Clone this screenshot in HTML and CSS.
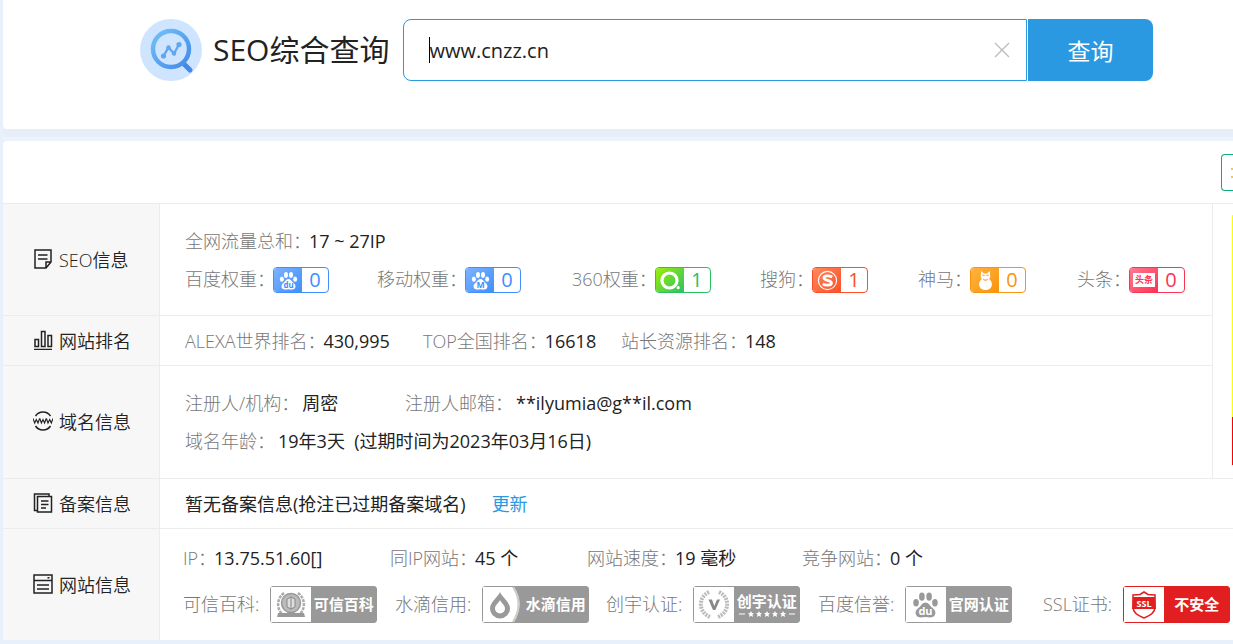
FILE: index.html
```
<!DOCTYPE html>
<html lang="zh">
<head>
    <meta charset="UTF-8">
    <meta name="viewport" content="width=device-width, initial-scale=1.0">
    <title>SEO综合查询</title>
    <link rel="stylesheet" href="styles.css">
</head>
<body>

    <svg class="defs" width="0" height="0" aria-hidden="true">
        <symbol id="paw" viewBox="0 0 24 24">
            <ellipse cx="3.6" cy="10.4" rx="2.5" ry="3.3"/>
            <ellipse cx="8.8" cy="5" rx="2.5" ry="3.6"/>
            <ellipse cx="15.2" cy="5" rx="2.5" ry="3.6"/>
            <ellipse cx="20.4" cy="10.4" rx="2.5" ry="3.3"/>
            <path d="M12 10.2c-2.4 0-3.4 2-4.8 3.5-1.600 1.700-4 2.900-4 5.700 0 2.700 1.800 4.100 4.300 4.100 1.600 0 3-.4 4.500-.4s2.900.4 4.500.4c2.500 0 4.300-1.400 4.300-4.100 0-2.800-2.400-4-4-5.700-1.400-1.500-2.400-3.500-4.800-3.500z"/>
        </symbol>
    </svg>

    <header class="top">
        <div class="search">
            <svg class="logo" viewBox="0 0 62 62" aria-hidden="true">
                <defs>
                    <linearGradient id="logoFill" x1="0" y1="0" x2="1" y2="1">
                        <stop offset="0" stop-color="#72c2f6"/>
                        <stop offset="1" stop-color="#4489e8"/>
                    </linearGradient>
                </defs>
                <circle cx="31" cy="31" r="31" fill="#cfe5ff"/>
                <path d="M44 45L50 51" stroke="#4489e8" stroke-width="5" stroke-linecap="round"/>
                <circle cx="31" cy="30" r="18" fill="none" stroke="url(#logoFill)" stroke-width="4.500"/>
                <path d="M23.500 37L28.500 28.500L34 34.500L39 25.500" fill="none" stroke="#62a6ef" stroke-width="2.400"/>
                <g fill="#62a6ef">
                    <circle cx="23.500" cy="37" r="2.600"/>
                    <circle cx="28.500" cy="28.500" r="2.200"/>
                    <circle cx="34" cy="34.500" r="2.200"/>
                    <circle cx="39" cy="25.500" r="2.600"/>
                </g>
            </svg>
            <h1>SEO综合查询</h1>
            <form class="search-form">
                <div class="search-box">
                    <input type="text" value="www.cnzz.cn" aria-label="域名">
                    <span class="caret"></span>
                    <button type="button" class="clear" aria-label="清空">
                        <svg viewBox="0 0 16 16"><path d="M1 1L15 15M15 1L1 15" stroke="#bbb" stroke-width="1.300"/></svg>
                    </button>
                </div>
                <button type="button" class="submit">查询</button>
            </form>
        </div>
    </header>

    <main class="panel">
        <div class="panel-head">
            <button type="button" class="tool" aria-label="工具">
                <svg viewBox="0 0 16 16"><path d="M0 4H14M0 12H14" stroke="#f3c84b" stroke-width="2"/></svg>
            </button>
        </div>

        <table class="info">
            <colgroup>
                <col class="col-name">
                <col>
                <col class="col-side">
            </colgroup>
            <tr>
                <th scope="row">
                    <div class="name">
                        <svg viewBox="0 0 20 20"><path d="M2 1H18V13L13 19H2ZM18 13H13V19M5 6H14.500M5 10H14.500"/></svg>
                        SEO信息
                    </div>
                </th>
                <td>
                    <div class="line"><span class="label">全网流量总和：</span>17 ~ 27IP</div>
                    <div class="line weights">
                        <div class="item"><span class="label">百度权重：</span>
                            <a href="#" class="rank blue">
                                <span class="rank-icon"><svg viewBox="0 0 24 24"><use href="#paw" fill="#fff"/><text x="12" y="21.500" text-anchor="middle" font-size="10" font-weight="700" fill="#3f8ffc">du</text></svg></span>
                                <span class="rank-num">0</span>
                            </a>
                        </div>
                        <div class="item"><span class="label">移动权重：</span>
                            <a href="#" class="rank blue">
                                <span class="rank-icon"><svg viewBox="0 0 24 24"><use href="#paw" fill="#fff"/><text x="12" y="22" text-anchor="middle" font-size="11" font-weight="700" fill="#3f8ffc">M</text></svg></span>
                                <span class="rank-num">0</span>
                            </a>
                        </div>
                        <div class="item"><span class="label">360权重：</span>
                            <a href="#" class="rank green">
                                <span class="rank-icon"><svg viewBox="0 0 24 24"><circle cx="12" cy="12" r="9.500" fill="none" stroke="#fff" stroke-width="4"/><circle cx="23" cy="21" r="2" fill="#fff"/></svg></span>
                                <span class="rank-num">1</span>
                            </a>
                        </div>
                        <div class="item"><span class="label">搜狗：</span>
                            <a href="#" class="rank red">
                                <span class="rank-icon"><svg viewBox="0 0 24 24"><circle cx="12" cy="12" r="11.500" fill="none" stroke="#fff" stroke-width="1.400"/><path d="M18 7.500C14 5.500 7.500 5.500 7.500 8.700C7.500 12 17 11.500 17 15C17 18.500 10 18.600 6 16.300" fill="none" stroke="#fff" stroke-width="3.600"/></svg></span>
                                <span class="rank-num">1</span>
                            </a>
                        </div>
                        <div class="item"><span class="label">神马：</span>
                            <a href="#" class="rank orange">
                                <span class="rank-icon"><svg viewBox="0 0 24 24"><path d="M6.500 0L10 3H14L17.500 0L18 8L16.500 10C19 12 20.500 14.500 20 18C19.500 22 16 24 12 24S4.500 22 4 18C3.500 14.500 5 12 7.500 10L6 8Z" fill="#fff"/><path d="M8 5.500H11M13 5.500H16M9 10.500Q12 12.500 15 10.500" fill="none" stroke="#ff9a0c" stroke-width="1.300"/></svg></span>
                                <span class="rank-num">0</span>
                            </a>
                        </div>
                        <div class="item"><span class="label">头条：</span>
                            <a href="#" class="rank pink">
                                <span class="rank-icon"><span class="toutiao">头条</span></span>
                                <span class="rank-num">0</span>
                            </a>
                        </div>
                    </div>
                </td>
                <td class="side" rowspan="3"><div class="ad"></div></td>
            </tr>
            <tr class="short">
                <th scope="row">
                    <div class="name">
                        <svg viewBox="0 0 20 20"><path d="M1 19.500H19M2 9.500H5.500V16.500H2ZM8.500 1.500H12V16.500H8.500ZM15 5.500H18.500V16.500H15Z"/></svg>
                        网站排名
                    </div>
                </th>
                <td>
                    <div class="line ranks">
                        <div class="item"><span class="label">ALEXA世界排名：</span>430,995</div>
                        <div class="item"><span class="label">TOP全国排名：</span>16618</div>
                        <div class="item"><span class="label">站长资源排名：</span>148</div>
                    </div>
                </td>
            </tr>
            <tr class="domain">
                <th scope="row">
                    <div class="name">
                        <svg viewBox="0 0 20 20"><path d="M2.500 5A9 9 0 0 1 17.500 5M2.500 15A9 9 0 0 0 17.500 15"/><path stroke-width="1.100" d="M0 7.500L1.700 12L3.300 8.500L5 12L6.600 7.500M6.800 7.500L8.400 12L10 8.500L11.600 12L13.200 7.500M13.400 7.500L15 12L16.700 8.500L18.300 12L20 7.500"/></svg>
                        域名信息
                    </div>
                </th>
                <td>
                    <div class="line owner">
                        <div class="item"><span class="label">注册人/机构：</span><span class="wide">周密</span></div>
                        <div class="item"><span class="label">注册人邮箱：</span><span class="wide">**ilyumia@g**il.com</span></div>
                    </div>
                    <div class="line"><span class="label">域名年龄：</span><span class="wide">19年3天&nbsp; (过期时间为2023年03月16日)</span></div>
                </td>
            </tr>
            <tr class="short">
                <th scope="row">
                    <div class="name">
                        <svg viewBox="0 0 20 20"><path d="M4.500 3.500H18.500V19H4.500ZM4.500 17.500H1.500V1H16V3.500M8 8H15.500M8 11.500H15.500M8 15H13"/></svg>
                        备案信息
                    </div>
                </th>
                <td colspan="2">
                    <div class="line record">暂无备案信息(抢注已过期备案域名)<a href="#">更新</a></div>
                </td>
            </tr>
            <tr class="site">
                <th scope="row">
                    <div class="name">
                        <svg viewBox="0 0 20 20"><path d="M1 1H19V19H1ZM1 6.500H19M4 11H16M4 15H16M14.500 3.800H16.500"/></svg>
                        网站信息
                    </div>
                </th>
                <td colspan="2">
                    <div class="line stats">
                        <div class="item"><span class="label">IP：</span>13.75.51.60[]</div>
                        <div class="item"><span class="label">同IP网站：</span>45 个</div>
                        <div class="item"><span class="label">网站速度：</span>19 毫秒</div>
                        <div class="item"><span class="label">竞争网站：</span>0 个</div>
                    </div>
                    <div class="line certs">
                        <div class="item"><span class="label">可信百科:</span>
                            <a href="#" class="cert">
                                <svg viewBox="0 0 40 35" aria-hidden="true">
                                    <path d="M13 6C5 12 6 22 11 27M27 6C35 12 34 22 29 27" fill="none" stroke="#aaa" stroke-width="2.500" stroke-dasharray="3 1"/>
                                    <circle cx="20" cy="16" r="9.500" fill="#bbb" stroke="#999" stroke-width="1.500"/>
                                    <path d="M16 12L20 10L24 12V20L20 22L16 20ZM20 10V22" fill="#ddd" stroke="#888"/>
                                    <path d="M7 26L33 26L34 30H6Z" fill="#999"/>
                                </svg>
                                <span>可信百科</span>
                            </a>
                        </div>
                        <div class="item"><span class="label">水滴信用:</span>
                            <a href="#" class="cert">
                                <svg viewBox="0 0 40 35" aria-hidden="true">
                                    <path d="M31 0Q42 17 31 35H40V0Z" fill="#999"/>
                                    <path d="M30 0Q41 17 30 35" fill="none" stroke="#ccc" stroke-width="2"/>
                                    <path d="M17 5C15 10 7 15 7 21.500A10 10 0 0 0 27 21.500C27 15 19 10 17 5ZM17 13C16 16 12 18 12 21.500A5 5 0 0 0 22 21.500C22 18 18 16 17 13Z" fill="#999" fill-rule="evenodd"/>
                                </svg>
                                <span>水滴信用</span>
                            </a>
                        </div>
                        <div class="item"><span class="label">创宇认证:</span>
                            <a href="#" class="cert">
                                <svg viewBox="0 0 40 35" aria-hidden="true">
                                    <path d="M15 5C4 10 4 25 16 30M25 5C36 10 36 25 24 30" fill="none" stroke="#bbb" stroke-width="4" stroke-dasharray="2 1"/>
                                    <path d="M14.500 12.500H18L20.300 19L23 12.500H26L21.300 23H19Z" fill="#888"/>
                                </svg>
                                <span>创宇认证
                                    <svg class="stars" viewBox="0 0 56 6" aria-hidden="true">
                                        <path d="M0 3H6M50 3H56" stroke="#fff"/>
                                        <g fill="#fff">
                                            <path id="star" d="M12 0L13 2H15L13.500 3.600L14 6L12 4.800L10 6L10.500 3.600L9 2H11Z"/>
                                            <use href="#star" x="8"/><use href="#star" x="16"/><use href="#star" x="24"/><use href="#star" x="32"/>
                                        </g>
                                    </svg>
                                </span>
                            </a>
                        </div>
                        <div class="item"><span class="label">百度信誉:</span>
                            <a href="#" class="cert">
                                <svg viewBox="0 0 40 35" aria-hidden="true">
                                    <use href="#paw" x="6" y="4" width="27" height="27" fill="#999"/>
                                    <text x="19.500" y="28" text-anchor="middle" font-size="11" font-weight="700" fill="#fff">du</text>
                                </svg>
                                <span>官网认证</span>
                            </a>
                        </div>
                        <div class="item"><span class="label">SSL证书:</span>
                            <a href="#" class="cert danger">
                                <svg viewBox="0 0 40 35" aria-hidden="true">
                                    <path d="M20 5L24 7.500L31 8V20Q31 27 20 31Q9 27 9 20V8L16 7.500Z" fill="#fff" stroke="#e21f20" stroke-width="1.500"/>
                                    <path d="M9 10H31L32 22H8Z" fill="#e21f20"/>
                                    <text x="20" y="20" text-anchor="middle" font-size="9" font-weight="700" fill="#fff">SSL</text>
                                </svg>
                                <span>不安全</span>
                            </a>
                        </div>
                    </div>
                </td>
            </tr>
        </table>
    </main>

</body>
</html>
```
FILE: styles.css
```
* {
    box-sizing: border-box;
}
body {
    margin: 0;
    padding: 0 0 4px 3px;
    background-color: #e8f1fb;
    color: #222;
    font-family: "Open Sans", "Noto Sans CJK SC", sans-serif;
    font-size: 18px;
    overflow: hidden;
}
a {
    color: #2b99e2;
    text-decoration: none;
}
button, input {
    font-family: inherit;
    padding: 0;
    border: none;
    background: none;
}
.defs {
    position: absolute;
}

/* search */
.top {
    background-color: #fff;
    padding: 19px 80px 48px 137px;
    border-radius: 0 0 0 4px;
    box-shadow: 0 8px 0 #e6eef7, 0 12px 0 #edf3fa;
}
.search {
    display: flex;
    align-items: center;
}
.logo {
    width: 62px;
    height: 62px;
    flex: none;
}
h1 {
    margin: 0 14px 0 11px;
    font-size: 30px;
    font-weight: 400;
    line-height: 62px;
    white-space: nowrap;
}
.search-form {
    flex: 1;
    display: flex;
    gap: 1px;
}
.search-box {
    flex: 1;
    display: flex;
    align-items: center;
    position: relative;
    height: 62px;
    padding: 0 16px 0 25px;
    border: 1px solid #2b99e2;
    border-radius: 8px 0 0 8px;
}
.search-box input {
    flex: 1;
    font-size: 20px;
    color: #222;
    outline: none;
}
.caret {
    position: absolute;
    left: 25px;
    top: 17px;
    width: 1px;
    height: 26px;
    background-color: #000;
}
.clear, .clear svg {
    display: block;
    width: 16px;
    height: 16px;
}
.submit {
    width: 125px;
    background-color: #2b99e2;
    border-radius: 0 8px 8px 0;
    color: #fff;
    font-size: 23px;
}

/* panel */
.panel {
    margin-top: 12px;
    background-color: #fff;
    border-radius: 4px 0 0 0;
}
.panel-head {
    display: flex;
    justify-content: flex-end;
    height: 62px;
    padding-top: 13px;
}
.tool {
    width: 12px;
    height: 37px;
    padding-left: 9px;
    border: 1px solid #0bad7f;
    border-right: none;
    border-radius: 4px 0 0 4px;
    overflow: hidden;
}
.tool svg {
    display: block;
    width: 16px;
    height: 16px;
}

/* info table */
.info {
    width: 100%;
    table-layout: fixed;
    border-spacing: 0;
    border-top: 1px solid #ececec;
}
.col-name {
    width: 157px;
}
.col-side {
    width: 21px;
}
th {
    padding: 0 0 2px;
    background-color: #f7f7f7;
    border-right: 1px solid #ececec;
    border-bottom: 1px solid #ececec;
    font-weight: 350;
}
td {
    padding: 18px 0 17px 25px;
    border-bottom: 1px solid #ececec;
    white-space: nowrap;
}
.short td {
    padding-top: 6px;
    padding-bottom: 5px;
}
.domain td {
    padding-bottom: 18px;
}
.site td {
    padding: 10px 0 17px 23px;
}
.site th, .site td {
    border-bottom: none;
}
td.side {
    padding: 11px 0 13px 19px;
    border-left: 1px solid #ececec;
    vertical-align: top;
}
.ad {
    height: 250px;
    background: linear-gradient(#ffff00 202px, #f00 202px);
}
.name {
    display: flex;
    align-items: center;
    gap: 6px;
    padding-left: 30px;
    white-space: nowrap;
}
.name svg {
    width: 20px;
    height: 20px;
    fill: none;
    stroke: #222;
    stroke-width: 1.5;
}
.line {
    line-height: 38px;
    font-weight: 400;
}
.label {
    margin-right: -2px;
    color: #777;
    font-weight: 300;
}
.wide {
    margin-left: 5px;
}
.item {
    display: flex;
    align-items: center;
}
.weights, .ranks, .owner, .stats, .certs {
    display: grid;
}
.weights {
    grid-template-columns: 192px 195px 188px 158px 159px auto;
}
.ranks {
    grid-template-columns: 238px 198px auto;
}
.owner {
    grid-template-columns: 220px auto;
}
.stats {
    grid-template-columns: 207px 197px 215px auto;
}
.certs {
    grid-template-columns: 212px 211px 212px 225px auto;
    margin-top: 8px;
}
.record a {
    margin-left: 26px;
}

/* rank badge */
.rank {
    --c: #3f8ffc;
    --c2: #7db3ff;
    display: flex;
    width: 56px;
    height: 26px;
    margin-top: 2px;
    border: 1px solid var(--c);
    border-radius: 4px;
    overflow: hidden;
    color: var(--c);
    line-height: 24px;
}
.green {
    --c: #2cc065;
    --c2: #a0ee08;
}
.red {
    --c: #fb4f28;
    --c2: #ff8a5c;
}
.orange {
    --c: #f8940d;
    --c2: #ffb340;
}
.pink {
    --c: #fc3352;
    --c2: #ff7a92;
}
.rank-icon {
    width: 28px;
    display: flex;
    align-items: center;
    justify-content: center;
    background: linear-gradient(135deg, var(--c2), var(--c));
}
.rank-icon svg {
    width: 19px;
    height: 19px;
    overflow: visible;
}
.rank-num {
    flex: 1;
    text-align: center;
    font-size: 20px;
    font-weight: 500;
}
.toutiao {
    padding: 0 2px;
    background-color: #fff;
    font-size: 9px;
    font-weight: 700;
    line-height: 14px;
}

/* cert badge */
.cert {
    display: flex;
    width: 107px;
    height: 37px;
    margin-left: 13px;
    border: 1px solid #999;
    border-radius: 3px;
    background-color: #999;
    color: #fff;
    font-size: 15px;
    font-weight: 700;
    line-height: 20px;
}
.cert > svg {
    width: 40px;
    height: 35px;
    background-color: #fff;
}
.cert span {
    flex: 1;
    align-self: center;
    text-align: center;
}
.stars {
    display: block;
    width: 56px;
    height: 6px;
    margin: 0 auto;
}
.danger {
    border-color: #e21f20;
    background-color: #e21f20;
}
```
